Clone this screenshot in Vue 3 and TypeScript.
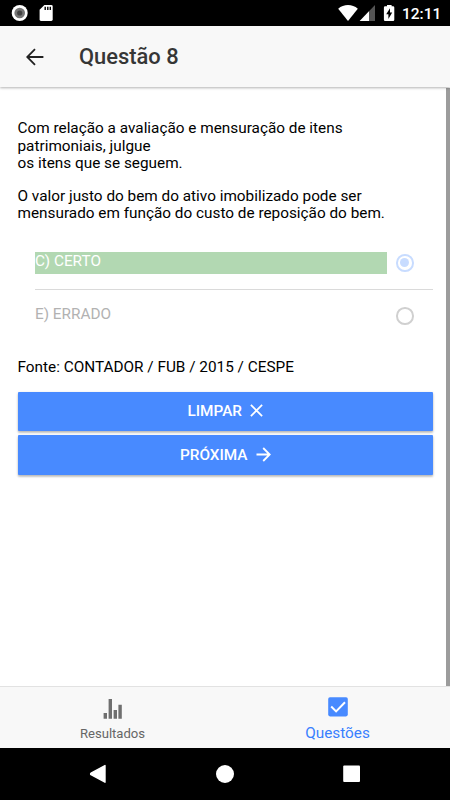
<script setup lang="ts">
import { ref } from 'vue'

interface Option {
  key: string
  label: string
  correct: boolean
}

const options: Option[] = [
  { key: 'C', label: 'C) CERTO', correct: true },
  { key: 'E', label: 'E) ERRADO', correct: false },
]
const selected = ref<string>('C')
</script>

<template>
  <div class="screen">
    <div class="status">
      <svg class="status-left" width="60" height="26" viewBox="0 0 60 26">
        <circle cx="19.7" cy="13" r="8" fill="#fff" />
        <circle cx="19.7" cy="13" r="5.3" fill="#757575" />
        <circle cx="19.7" cy="13" r="2.6" fill="#424242" />
        <path d="M44.4 5H51.3Q52.7 5 52.7 6.4V19.6Q52.7 21 51.3 21H41Q39.6 21 39.6 19.6V9.8Z" fill="#fff" />
        <path d="M45.2 6.8V10M47.8 6.8V10M50.3 6.8V10" stroke="#000" stroke-width="1.4" />
      </svg>
      <svg class="status-right" width="62" height="26" viewBox="0 0 62 26">
        <path d="M0.2 8.7C5.6 3.9 14.4 3.9 19.8 8.7L10 21Z" fill="#fff" />
        <path d="M37 5V21H21.7Z" fill="#555" />
        <path d="M31 11.3V21H21.7Z" fill="#fff" />
        <path d="M49 6.2V5H53.6V6.2H55.1Q56.3 6.2 56.3 7.4V19.8Q56.3 21 55.1 21H47.1Q45.9 21 45.9 19.8V7.4Q45.9 6.2 47.1 6.2Z" fill="#fff" />
        <path d="M52 8.2L48.2 14.3H50.4V18.9L54.2 12.5H52Z" fill="#000" />
      </svg>
      <span class="clock">12:11</span>
    </div>

    <header class="header">
      <svg width="18" height="18" viewBox="0 0 18 18">
        <path d="M17.4 9H1.4M9 1.1L1.2 9L9 16.9" fill="none" stroke="#222" stroke-width="1.8" />
      </svg>
      <h1>Questão 8</h1>
    </header>

    <main class="content">
      <div class="page">
        <p>Com relação a avaliação e mensuração de itens<br>patrimoniais, julgue<br>os itens que se seguem.</p>
        <p>O valor justo do bem do ativo imobilizado pode ser<br>mensurado em função do custo de reposição do bem.</p>
        <div class="options">
          <div v-for="option in options" :key="option.key" class="option">
            <span class="label" :class="{ correct: option.correct }">{{ option.label }}</span>
            <span class="radio" :class="{ checked: selected === option.key }"></span>
          </div>
        </div>
        <p class="source">Fonte: CONTADOR / FUB / 2015 / CESPE</p>
        <button class="action" type="button">
          <span>LIMPAR</span>
          <svg class="icon" width="13" height="13" viewBox="0 0 13 13">
            <path d="M0.9 0.9L12.1 12.1M12.1 0.9L0.9 12.1" stroke="#fff" stroke-width="1.8" />
          </svg>
        </button>
        <button class="action" type="button">
          <span>PRÓXIMA</span>
          <svg class="icon" width="15" height="15" viewBox="0 0 15 15">
            <path d="M0.5 7.5H13.6M7.2 1L13.7 7.5L7.2 14" fill="none" stroke="#fff" stroke-width="1.8" />
          </svg>
        </button>
      </div>
      <div class="scrollbar"></div>
    </main>

    <nav class="tabs">
      <div class="tab">
        <svg width="20" height="20" viewBox="0 0 20 20">
          <path d="M0.6 14H4V19.8H0.6ZM5.6 0H9V19.8H5.6ZM10.6 11H14V19.8H10.6ZM15.4 5.8H18.8V19.8H15.4Z" fill="#6f6f6f" />
        </svg>
        <span>Resultados</span>
      </div>
      <div class="tab active">
        <svg width="20" height="20" viewBox="0 0 20 20">
          <rect x="0.2" y="0.2" width="19.6" height="19.2" rx="1.8" fill="#488aff" />
          <path d="M3.2 9.5L8.1 14.4L17 5.3" fill="none" stroke="#fff" stroke-width="2" />
        </svg>
        <span>Questões</span>
      </div>
    </nav>

    <div class="system-nav">
      <svg width="450" height="52" viewBox="0 0 450 52">
        <path d="M105 17.6V34.2L91 26.6Q90.2 25.9 91 25.2Z" fill="#fff" stroke="#fff" stroke-width="1.4" stroke-linejoin="round" />
        <circle cx="225" cy="26" r="9" fill="#fff" />
        <rect x="343.2" y="17.5" width="16.8" height="16.6" rx="1" fill="#fff" />
      </svg>
    </div>
  </div>
</template>

<style>
body {
  margin: 0;
}
</style>

<style scoped>
.screen {
  width: 450px;
  height: 800px;
  display: flex;
  flex-direction: column;
  overflow: hidden;
  background: #fff;
  color: #000;
  font-family: Roboto, "Liberation Sans", sans-serif;
  font-size: 15.33px;
}
.screen svg {
  display: block;
  flex: none;
}
.status {
  height: 26px;
  flex: none;
  display: flex;
  align-items: center;
  background: #000;
}
.status-right {
  margin-left: 278px;
}
.clock {
  margin-left: 2px;
  padding-top: 2px;
  color: #fff;
  font-size: 15.5px;
  font-weight: 500;
  line-height: 20px;
}
.header {
  box-sizing: border-box;
  height: 61px;
  flex: none;
  display: flex;
  align-items: center;
  padding: 1px 0 0 26px;
  gap: 35px;
  background: #f8f8f8;
  box-shadow: 0 1px 2.5px rgba(0, 0, 0, 0.3);
  z-index: 1;
}
.header h1 {
  margin: 0;
  font-size: 21.9px;
  font-weight: 500;
  line-height: 26px;
  color: #363636;
}
.content {
  flex: 1;
  min-height: 0;
  display: flex;
}
.page {
  flex: 1;
  padding: 33px 13px 0 17.5px;
}
.page p {
  margin: 0 0 15.3px;
  line-height: 17.5px;
  white-space: nowrap;
}
.scrollbar {
  width: 4px;
  margin-top: 1px;
  background: #9c9c9c;
}
.options {
  margin: -1px 0 17px 17.5px;
}
.option {
  box-sizing: border-box;
  height: 52.5px;
  display: flex;
  align-items: center;
  padding-right: 19.5px;
  gap: 9px;
}
.option:first-child {
  border-bottom: 1px solid #dadada;
}
.label {
  flex: 1;
  height: 22.5px;
  line-height: 19px;
  color: #b2b2b2;
}
.label.correct {
  background: #b2d8b2;
  color: #fff;
}
.radio {
  box-sizing: border-box;
  width: 17.5px;
  height: 17.5px;
  border: 2.2px solid #d0d0d0;
  border-radius: 50%;
  display: flex;
  align-items: center;
  justify-content: center;
}
.radio.checked {
  border-color: #c8dcff;
}
.radio.checked::after {
  content: "";
  width: 9px;
  height: 9px;
  border-radius: 50%;
  background: #c8dcff;
}
.page .source {
  margin-bottom: 15px;
}
.action {
  width: 100%;
  height: 39.5px;
  margin: 0 0 4.3px;
  padding: 0 0 1px;
  border: 0;
  border-radius: 1px;
  display: flex;
  align-items: center;
  justify-content: center;
  background: #488aff;
  box-shadow: 0 2px 2px rgba(0, 0, 0, 0.14), 0 1px 3px rgba(0, 0, 0, 0.2);
  color: #fff;
  font-family: inherit;
  font-size: 15.33px;
  font-weight: 500;
  line-height: 18px;
}
.action .icon {
  margin-left: 8px;
}
.tabs {
  box-sizing: border-box;
  height: 62px;
  flex: none;
  display: flex;
  border-top: 1px solid #e2e2e2;
  background: #f8f8f8;
}
.tab {
  flex: 1;
  display: flex;
  flex-direction: column;
  align-items: center;
  padding-top: 12px;
  color: #666;
  font-size: 13.1px;
}
.tab span {
  margin-top: 7px;
  line-height: 16px;
}
.tab.active {
  padding-top: 10px;
  color: #3880ff;
  font-size: 15.33px;
}
.tab.active span {
  margin-top: 8px;
}
.system-nav {
  height: 52px;
  flex: none;
  background: #000;
}
</style>
